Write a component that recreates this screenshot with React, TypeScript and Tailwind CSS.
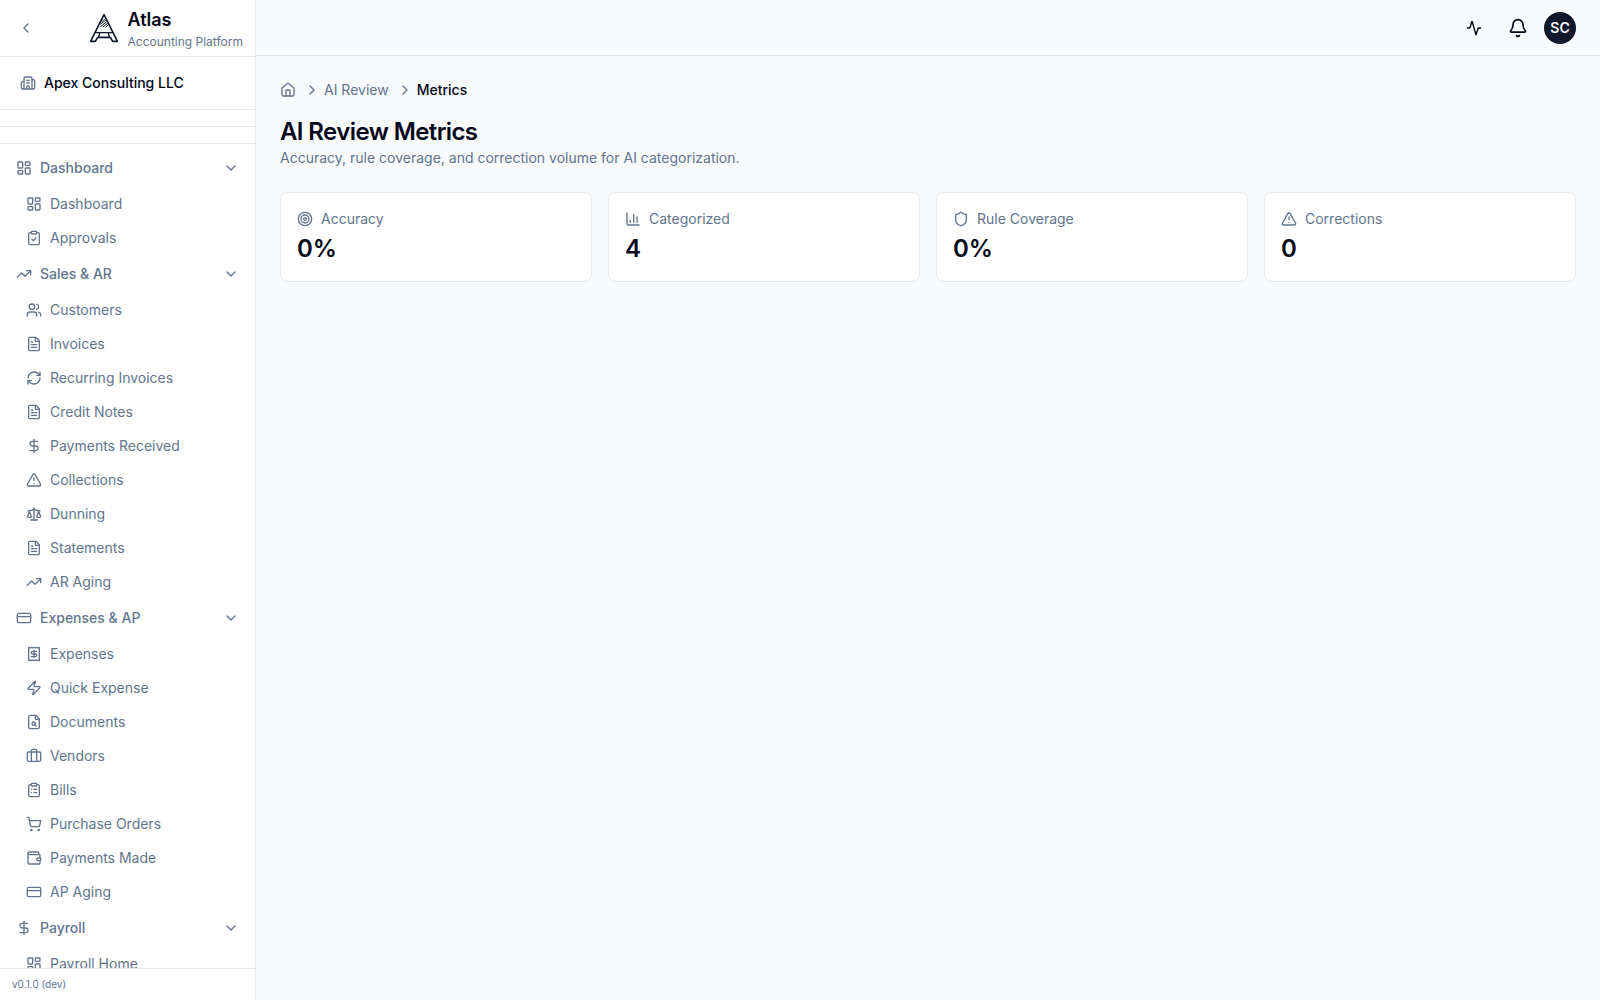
import { useState } from "react";
import {
  Activity,
  Bell,
  Briefcase,
  Building2,
  ChartColumn,
  ChevronDown,
  ChevronLeft,
  ChevronRight,
  ClipboardCheck,
  ClipboardList,
  CreditCard,
  DollarSign,
  FileSearch,
  FileText,
  House,
  LayoutDashboard,
  Receipt,
  RefreshCw,
  Scale,
  Shield,
  ShoppingCart,
  Target,
  TrendingUp,
  TriangleAlert,
  Users,
  Wallet,
  Zap,
} from "lucide-react";

type NavItem = { label: string; icon: React.ElementType };
type NavGroup = NavItem & { items: NavItem[] };

const NAV_GROUPS: NavGroup[] = [
  {
    label: "Dashboard",
    icon: LayoutDashboard,
    items: [
      { label: "Dashboard", icon: LayoutDashboard },
      { label: "Approvals", icon: ClipboardCheck },
    ],
  },
  {
    label: "Sales & AR",
    icon: TrendingUp,
    items: [
      { label: "Customers", icon: Users },
      { label: "Invoices", icon: FileText },
      { label: "Recurring Invoices", icon: RefreshCw },
      { label: "Credit Notes", icon: FileText },
      { label: "Payments Received", icon: DollarSign },
      { label: "Collections", icon: TriangleAlert },
      { label: "Dunning", icon: Scale },
      { label: "Statements", icon: FileText },
      { label: "AR Aging", icon: TrendingUp },
    ],
  },
  {
    label: "Expenses & AP",
    icon: CreditCard,
    items: [
      { label: "Expenses", icon: Receipt },
      { label: "Quick Expense", icon: Zap },
      { label: "Documents", icon: FileSearch },
      { label: "Vendors", icon: Briefcase },
      { label: "Bills", icon: ClipboardList },
      { label: "Purchase Orders", icon: ShoppingCart },
      { label: "Payments Made", icon: Wallet },
      { label: "AP Aging", icon: CreditCard },
    ],
  },
  {
    label: "Payroll",
    icon: DollarSign,
    items: [{ label: "Payroll Home", icon: LayoutDashboard }],
  },
];

const METRICS = [
  { label: "Accuracy", value: "0%", icon: Target },
  { label: "Categorized", value: "4", icon: ChartColumn },
  { label: "Rule Coverage", value: "0%", icon: Shield },
  { label: "Corrections", value: "0", icon: TriangleAlert },
];

function AtlasLogo() {
  return (
    <svg viewBox="0 0 32 32" className="h-8 w-8 text-slate-900" fill="none" stroke="currentColor" strokeLinejoin="round" strokeLinecap="round" aria-hidden="true">
      {/* outer frame and feet */}
      <path strokeWidth="1.6" d="M16 2.6 2.6 29.4h4.8l2.2-4h12.8l2.2 4h4.8z" />
      {/* crossbar */}
      <path strokeWidth="1.4" d="M7.4 20.6h17.2M11.6 20.8l-1 4.4M20.4 20.8l1 4.4" />
      {/* hatched tip */}
      <path strokeWidth="1" d="M14 9.4l2.4-2M12.8 12l4.8-3.8M12.6 14.6l5.8-4.6M15.2 14.8l4-3.2M18 14.8l1.8-1.4" />
    </svg>
  );
}

function SidebarGroup({ group }: { group: NavGroup }) {
  const [open, setOpen] = useState(true);
  const Icon = group.icon;

  return (
    <li className="space-y-0.5">
      <button
        onClick={() => setOpen(!open)}
        aria-expanded={open}
        className="flex w-full items-center gap-2 rounded-md px-2 py-2 text-sm font-medium hover:bg-slate-100"
      >
        <Icon className="h-4 w-4 shrink-0" />
        <span className="flex-1 text-left">{group.label}</span>
        <ChevronDown className={open ? "h-4 w-4" : "h-4 w-4 -rotate-90"} />
      </button>
      {open && (
        <ul className="space-y-0.5 pl-2">
          {group.items.map((item) => {
            const ItemIcon = item.icon;
            return (
              <li key={item.label}>
                <a href="#" className="flex items-center gap-2 rounded-md px-2.5 py-1.5 text-sm hover:bg-slate-100">
                  <ItemIcon className="h-4 w-4 shrink-0" />
                  <span>{item.label}</span>
                </a>
              </li>
            );
          })}
        </ul>
      )}
    </li>
  );
}

function Sidebar() {
  return (
    <aside className="flex w-64 shrink-0 flex-col border-r border-slate-200 bg-white text-slate-500">
      <div className="flex items-center justify-between border-b border-slate-200 px-3 py-1.5">
        <button aria-label="Collapse sidebar" className="flex h-7 w-7 items-center justify-center rounded-md hover:bg-slate-100">
          <ChevronLeft className="h-4 w-4" />
        </button>
        <a href="#" className="flex items-center gap-2">
          <AtlasLogo />
          <span className="flex flex-col">
            <span className="text-lg font-semibold leading-7 text-slate-950">Atlas</span>
            <span className="text-xs">Accounting Platform</span>
          </span>
        </a>
      </div>

      <div className="border-b border-slate-200 p-2">
        <button className="flex h-9 w-full items-center gap-2 rounded-md px-3 text-sm font-medium hover:bg-slate-100">
          <Building2 className="h-4 w-4 shrink-0" />
          <span className="text-slate-950">Apex Consulting LLC</span>
        </button>
      </div>
      <div className="border-b border-slate-200 p-2" />
      <div className="border-b border-slate-200 p-2" />

      <nav aria-label="Main" className="min-h-0 flex-1 overflow-y-auto px-2 py-1.5 [scrollbar-width:none]">
        <ul className="space-y-0.5">
          {NAV_GROUPS.map((group) => (
            <SidebarGroup key={group.label} group={group} />
          ))}
        </ul>
      </nav>

      <div className="border-t border-slate-200 px-3 py-2 text-[10px] leading-[15px]">v0.1.0 (dev)</div>
    </aside>
  );
}

export default function App() {
  return (
    <div className="flex h-screen overflow-hidden bg-slate-50 font-[Inter,sans-serif] text-slate-950 antialiased">
      <Sidebar />

      <div className="flex min-w-0 flex-1 flex-col">
        <header className="flex h-14 shrink-0 items-center justify-end gap-2 border-b border-slate-200 px-6">
          <button aria-label="Activity" className="flex h-9 w-9 items-center justify-center rounded-md hover:bg-slate-100">
            <Activity className="h-4 w-4" />
          </button>
          <button aria-label="Notifications" className="flex h-9 w-9 items-center justify-center rounded-md hover:bg-slate-100">
            <Bell className="h-5 w-5" />
          </button>
          <button className="flex h-8 w-8 items-center justify-center rounded-full bg-slate-900 text-sm font-semibold text-slate-50">
            SC
          </button>
        </header>

        <main className="flex-1 overflow-y-auto p-6">
          <nav aria-label="Breadcrumb" className="mb-4">
            <ol className="flex items-center gap-2 text-sm text-slate-500">
              <li>
                <a href="#" aria-label="Home">
                  <House className="h-4 w-4" />
                </a>
              </li>
              <li className="flex items-center gap-1">
                <ChevronRight className="h-4 w-4" />
                <a href="#">AI Review</a>
              </li>
              <li className="flex items-center gap-1">
                <ChevronRight className="h-4 w-4" />
                <span className="font-medium text-slate-950">Metrics</span>
              </li>
            </ol>
          </nav>

          <h1 className="text-2xl font-semibold tracking-tight">AI Review Metrics</h1>
          <p className="text-sm text-slate-500">Accuracy, rule coverage, and correction volume for AI categorization.</p>

          <div className="mt-6 grid grid-cols-2 gap-4 lg:grid-cols-4">
            {METRICS.map(({ label, value, icon: Icon }) => (
              <div key={label} className="rounded-lg border border-slate-200 bg-white p-4">
                <div className="flex items-center gap-2 text-sm text-slate-500">
                  <Icon className="h-4 w-4" />
                  <span>{label}</span>
                </div>
                <div className="mt-1 text-2xl font-semibold">{value}</div>
              </div>
            ))}
          </div>
        </main>
      </div>
    </div>
  );
}
